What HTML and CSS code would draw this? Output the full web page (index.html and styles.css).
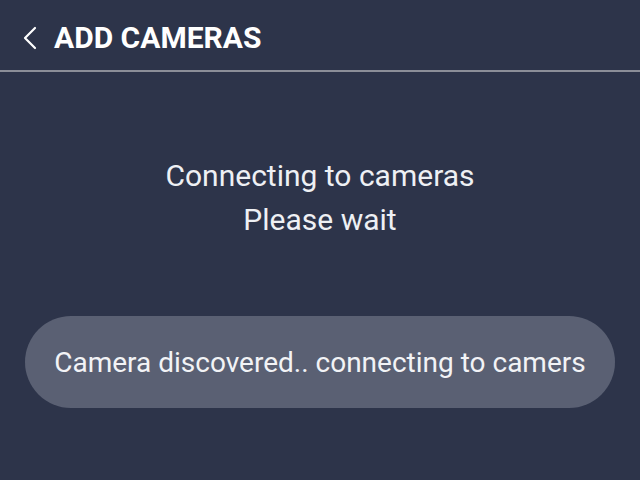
FILE: index.html
```html
<!DOCTYPE html>
<html lang="en">
<head>
<meta charset="utf-8">
<title>Add Cameras</title>
<link rel="stylesheet" href="styles.css">
</head>
<body>
<div class="screen">
  <header class="topbar">
    <button class="back" aria-label="Back">
      <svg width="16" height="24" viewBox="0 0 16 24"><path d="M13 2 L3 12 L13 22" fill="none" stroke="#ffffff" stroke-width="2.2" stroke-linecap="round" stroke-linejoin="round"/></svg>
    </button>
    <h1 class="title">ADD CAMERAS</h1>
  </header>
  <main class="content">
    <p class="status">Connecting to cameras<br>Please wait</p>
    <div class="toast">Camera discovered.. connecting to camers</div>
  </main>
</div>
</body>
</html>
```
FILE: styles.css
```css
html, body {
  margin: 0;
  padding: 0;
  background: #2d344a;
}
.screen {
  width: 640px;
  height: 480px;
  background: #2d344a;
  color: #ffffff;
  font-family: Roboto, "Noto Sans", sans-serif;
  display: flex;
  flex-direction: column;
}
.topbar {
  height: 72px;
  box-sizing: border-box;
  border-bottom: 2px solid #8b8e98;
  display: flex;
  align-items: center;
  padding-top: 5px;
  padding-left: 22px;
  gap: 16px;
}
.back {
  background: none;
  border: 0;
  padding: 0;
  display: flex;
  align-items: center;
}
.title {
  margin: 0;
  font-size: 30px;
  font-weight: 700;
  letter-spacing: 0;
}
.content {
  display: flex;
  flex-direction: column;
  align-items: center;
  padding-top: 82px;
}
.status {
  margin: 0;
  text-align: center;
  font-size: 30px;
  line-height: 44px;
  color: #eef0f4;
}
.toast {
  margin-top: 74px;
  width: 590px;
  height: 92px;
  border-radius: 46px;
  background: #5a6073;
  display: flex;
  align-items: center;
  justify-content: center;
  font-size: 28px;
  color: #f2f3f6;
}
```
